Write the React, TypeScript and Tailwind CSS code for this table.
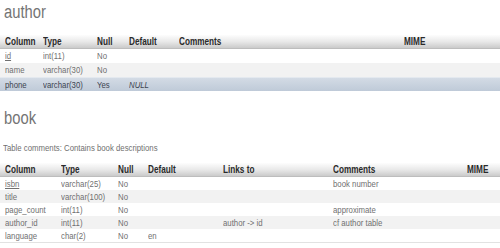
import React from 'react';

type Row = { cells: string[]; key?: boolean; tone: 'white' | 'gray' | 'hl'; italic?: number };

const font = { fontFamily: '"Liberation Sans", Arial, sans-serif' };

const authorCols = 'grid-cols-[38px_54px_32px_50px_225px_1fr]';
const bookCols = 'grid-cols-[56px_57px_30px_75px_110px_134px_1fr]';

const authorHead = ['Column', 'Type', 'Null', 'Default', 'Comments', 'MIME'];
const authorRows: Row[] = [
  { cells: ['id', 'int(11)', 'No', '', '', ''], key: true, tone: 'white' },
  { cells: ['name', 'varchar(30)', 'No', '', '', ''], tone: 'gray' },
  { cells: ['phone', 'varchar(30)', 'Yes', 'NULL', '', ''], tone: 'hl', italic: 3 },
];

const bookHead = ['Column', 'Type', 'Null', 'Default', 'Links to', 'Comments', 'MIME'];
const bookRows: Row[] = [
  { cells: ['isbn', 'varchar(25)', 'No', '', '', 'book number', ''], key: true, tone: 'white' },
  { cells: ['title', 'varchar(100)', 'No', '', '', '', ''], tone: 'gray' },
  { cells: ['page_count', 'int(11)', 'No', '', '', 'approximate', ''], tone: 'white' },
  { cells: ['author_id', 'int(11)', 'No', '', 'author -> id', 'cf author table', ''], tone: 'gray' },
  { cells: ['language', 'char(2)', 'No', 'en', '', '', ''], tone: 'white' },
];

// the screenshot is squeezed sideways, so text is narrowed to match
function Narrow({ children, className = '' }: { children: React.ReactNode; className?: string }) {
  return <span className={`inline-block origin-left scale-x-[0.82] whitespace-nowrap ${className}`}>{children}</span>;
}

function StructTable({ cols, head, rows, rowH }: { cols: string; head: string[]; rows: Row[]; rowH: string }) {
  return (
    <div className="w-full">
      <div className={`grid ${cols} h-[14px] items-center bg-gradient-to-b from-[#fdfdfd] via-[#e9e9e9] to-[#cbcbcb] border-b border-[#bdbdbd]`}>
        {head.map((h, i) => (
          <div key={i} className="pl-[5px] text-[10px] font-bold text-[#2a2a2a] leading-none">
            <Narrow>{h}</Narrow>
          </div>
        ))}
      </div>
      {rows.map((r, ri) => (
        <div
          key={ri}
          className={`grid ${cols} ${rowH} items-center ${
            r.tone === 'gray'
              ? 'bg-[#f2f2f2]'
              : r.tone === 'hl'
              ? 'bg-gradient-to-b from-[#d3dbe5] to-[#bfcad8] border-t border-[#e4e9ef]'
              : 'bg-white'
          }`}
        >
          {r.cells.map((c, ci) => (
            <div
              key={ci}
              className={`pl-[5px] text-[9.5px] leading-none ${r.tone === 'hl' ? 'text-[#3d4450]' : 'text-[#707070]'}`}
            >
              <Narrow className={`${ci === 0 && r.key ? 'underline' : ''} ${r.italic === ci ? 'italic' : ''}`}>{c}</Narrow>
            </div>
          ))}
        </div>
      ))}
    </div>
  );
}

export default function App() {
  return (
    <div className="w-[500px] h-[248px] bg-white overflow-hidden" style={font}>
      <h2 className="pl-[4px] pt-[2px] text-[18px] leading-[21px] text-[#747474]">
        <Narrow>author</Narrow>
      </h2>
      <div className="mt-[12px]">
        <StructTable cols={authorCols} head={authorHead} rows={authorRows} rowH="h-[14px]" />
      </div>
      <h2 className="pl-[4px] mt-[17px] text-[18px] leading-[21px] text-[#747474]">
        <Narrow>book</Narrow>
      </h2>
      <p className="pl-[3px] mt-[14px] text-[9.5px] leading-[10px] text-[#707070]">
        <Narrow>Table comments: Contains book descriptions</Narrow>
      </p>
      <div className="mt-[10px] border-b border-[#e2e2e2]">
        <StructTable cols={bookCols} head={bookHead} rows={bookRows} rowH="h-[13px]" />
      </div>
    </div>
  );
}
